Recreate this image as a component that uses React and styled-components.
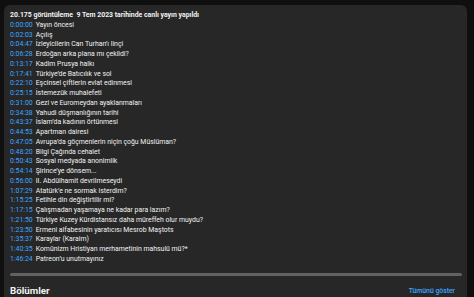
import React from 'react';
import styled, { createGlobalStyle } from 'styled-components';

const GlobalStyle = createGlobalStyle`
  html, body {
    margin: 0;
    padding: 0;
    background: #0f0f0f;
    overflow: hidden;
  }
  body {
    font-family: Roboto, "Liberation Sans", Arial, sans-serif;
  }
`;

const Page = styled.div`
  width: 474px;
  height: 297px;
  padding: 5px 7px 0 4px;
  box-sizing: border-box;
  overflow: hidden;
`;

const Card = styled.div`
  background: #272727;
  border-radius: 6px 6px 0 0;
  padding: 6px 5px 0 6px;
  height: 292px;
  box-sizing: border-box;
`;

const Description = styled.div`
  font-size: 6.9px;
  line-height: 9.75px;
  color: #f1f1f1;
`;

const Meta = styled.div`
  font-weight: 700;
  white-space: pre;
`;

const Row = styled.div`
  white-space: nowrap;
`;

const Stamp = styled.a`
  color: #3ea6ff;
  text-decoration: none;
  margin-right: 3px;
`;

const Bar = styled.div`
  height: 3px;
  margin-top: 8px;
  background: #626262;
  border-radius: 1.5px;
`;

const SectionHead = styled.div`
  display: flex;
  align-items: center;
  justify-content: space-between;
  margin-top: 9px;
  padding-right: 7px;
`;

const SectionTitle = styled.h2`
  margin: 0;
  font-size: 9.75px;
  line-height: 12px;
  font-weight: 700;
  color: #f1f1f1;
`;

const ShowAll = styled.button`
  background: none;
  border: none;
  padding: 0;
  font-family: inherit;
  font-size: 6.83px;
  font-weight: 500;
  color: #3ea6ff;
`;

const chapters = [
  ['0:00:00', 'Yayın öncesi'],
  ['0:02:03', 'Açılış'],
  ['0:04:47', 'İzleyicilerin Can Turhan\u2019ı linçi'],
  ['0:06:28', 'Erdoğan arka plana mı çekildi?'],
  ['0:13:17', 'Kadim Prusya halkı'],
  ['0:17:41', 'Türkiye\u2019de Batıcılık ve sol'],
  ['0:22:10', 'Eşcinsel çiftlerin evlat edinmesi'],
  ['0:25:15', 'İstemezük muhalefeti'],
  ['0:31:00', 'Gezi ve Euromeydan ayaklanmaları'],
  ['0:34:38', 'Yahudi düşmanlığının tarihi'],
  ['0:43:37', 'İslam\u2019da kadının örtünmesi'],
  ['0:44:53', 'Apartman dairesi'],
  ['0:47:05', 'Avrupa\u2019da göçmenlerin niçin çoğu Müslüman?'],
  ['0:48:20', 'Bilgi Çağında cehalet'],
  ['0:50:43', 'Sosyal medyada anonimlik'],
  ['0:54:14', 'Şirince\u2019ye dönsem...'],
  ['0:56:00', 'II. Abdülhamit devrilmeseydi'],
  ['1:07:29', 'Atatürk\u2019e ne sormak isterdim?'],
  ['1:15:25', 'Fetihle din değiştirtilir mi?'],
  ['1:17:15', 'Çalışmadan yaşamaya ne kadar para lazım?'],
  ['1:21:50', 'Türkiye Kuzey Kürdistansız daha müreffeh olur muydu?'],
  ['1:23:50', 'Ermeni alfabesinin yaratıcısı Mesrob Maştots'],
  ['1:35:37', 'Karaylar (Karaim)'],
  ['1:40:35', 'Komünizm Hristiyan merhametinin mahsulü mü?*'],
  ['1:46:24', 'Patreon\u2019u unutmayınız'],
];

const App = () => {
  return (
    <Page>
      <GlobalStyle />
      <Card>
        <Description>
          <Meta>20.175 görüntüleme  9 Tem 2023 tarihinde canlı yayın yapıldı</Meta>
          {chapters.map(([time, title]) => (
            <Row key={time}>
              <Stamp href="#">{time}</Stamp>
              {title}
            </Row>
          ))}
        </Description>
        <Bar />
        <SectionHead>
          <SectionTitle>Bölümler</SectionTitle>
          <ShowAll>Tümünü göster</ShowAll>
        </SectionHead>
      </Card>
    </Page>
  );
};

export default App;
